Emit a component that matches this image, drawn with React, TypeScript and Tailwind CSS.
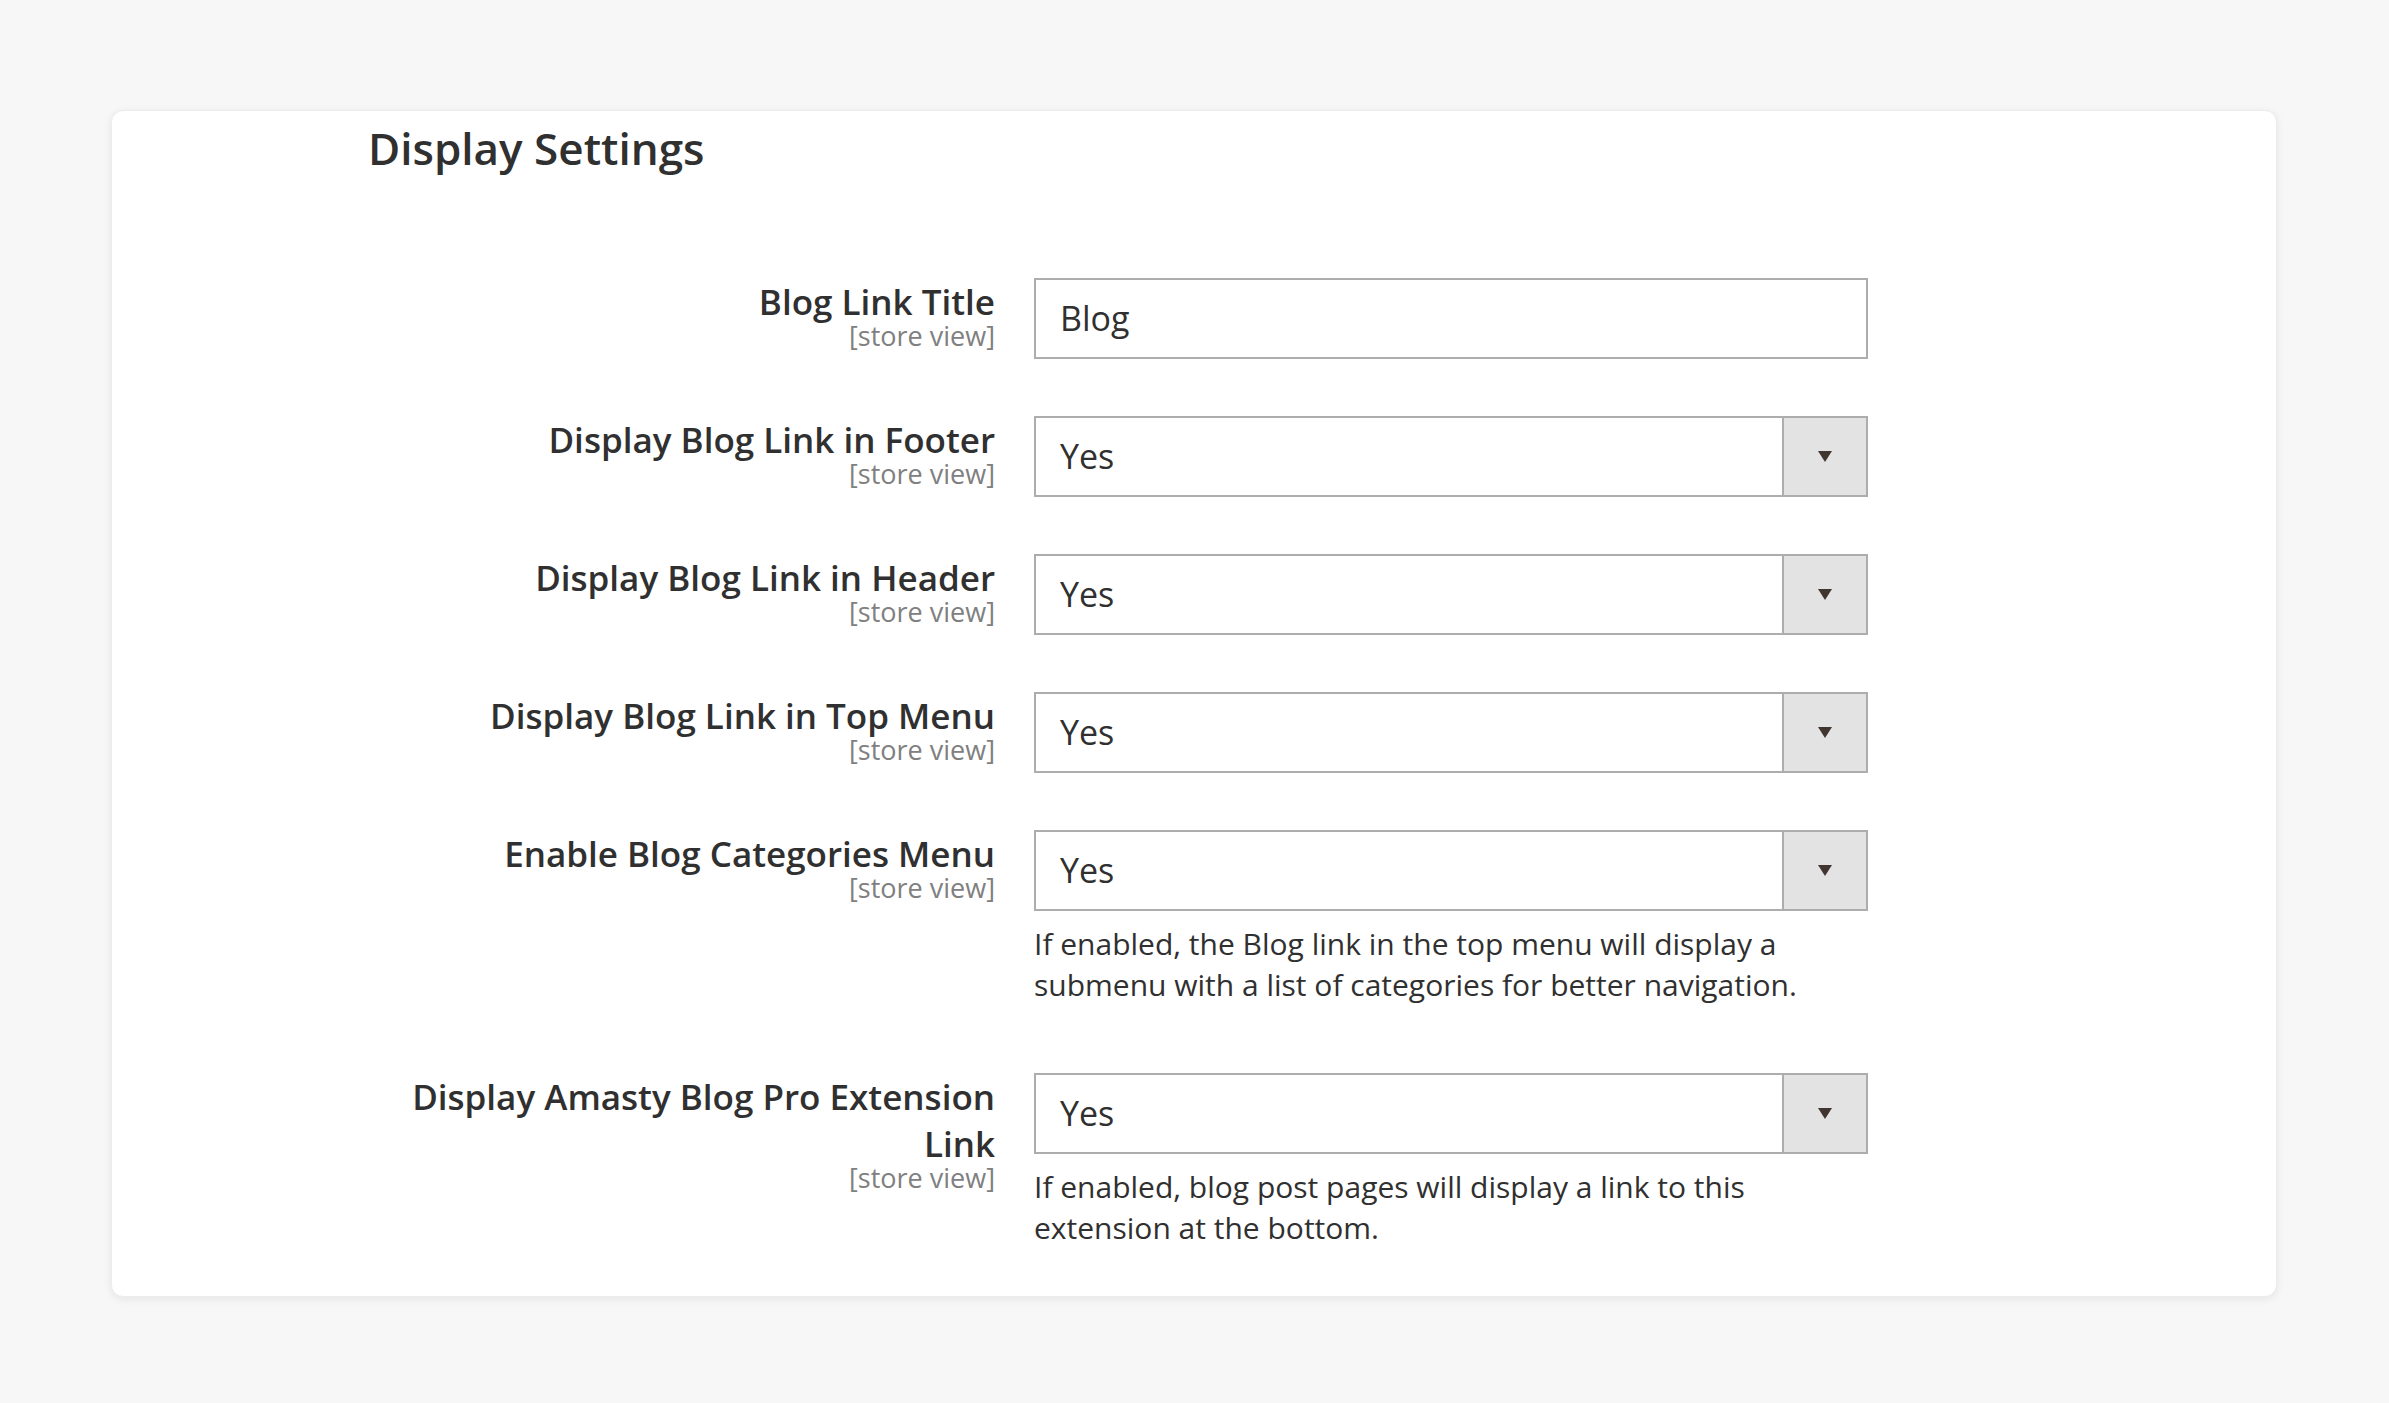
import React from 'react';

type Field = {
  label: string;
  value: string;
  select: boolean;
  help?: string[];
};

const FIELDS: Field[] = [
  { label: 'Blog Link Title', value: 'Blog', select: false },
  { label: 'Display Blog Link in Footer', value: 'Yes', select: true },
  { label: 'Display Blog Link in Header', value: 'Yes', select: true },
  { label: 'Display Blog Link in Top Menu', value: 'Yes', select: true },
  {
    label: 'Enable Blog Categories Menu',
    value: 'Yes',
    select: true,
    help: [
      'If enabled, the Blog link in the top menu will display a',
      'submenu with a list of categories for better navigation.',
    ],
  },
  {
    label: 'Display Amasty Blog Pro Extension Link',
    value: 'Yes',
    select: true,
    help: ['If enabled, blog post pages will display a link to this', 'extension at the bottom.'],
  },
];

const App = () => {
  return (
    <div
      className="min-h-screen bg-[#f7f7f7] pt-[110px] pl-[111px]"
      style={{ fontFamily: '"Open Sans", "Noto Sans", sans-serif' }}
    >
      <div className="w-[2166px] rounded-[12px] bg-white pt-[12px] pb-[48px] pl-[256px] shadow-[0_2px_8px_rgba(0,0,0,0.08)] border border-[#ececec]">
        <h2 className="text-[44px] leading-[50px] font-semibold text-[#303030]">Display Settings</h2>

        <div className="mt-[105px] flex flex-col">
          {FIELDS.map((f, i) => (
            <div key={i} className={`flex ${f.help ? 'mb-[68px]' : 'mb-[57px]'} last:mb-0`}>
              {/* Label column */}
              <div className="w-[627px] shrink-0 text-right">
                <div className="text-[35px] leading-[47px] font-semibold text-[#303030]">{f.label}</div>
                <div className="-mt-[4px] text-[27px] leading-[30px] text-[#808080]">[store view]</div>
              </div>

              {/* Control column */}
              <div className="ml-[39px] w-[834px]">
                <div className="flex h-[81px] border-2 border-[#adadad] bg-white">
                  <div className="flex flex-1 items-center pl-[24px] text-[34px] text-[#303030]">{f.value}</div>
                  {f.select && (
                    <div className="flex w-[84px] items-center justify-center border-l-2 border-[#adadad] bg-[#e3e3e3]">
                      <svg width="14" height="11" viewBox="0 0 14 11">
                        <path d="M0 0 H14 L7 11 Z" fill="#41362f" />
                      </svg>
                    </div>
                  )}
                </div>
                {f.help && (
                  <div className="mt-[12px] text-[30px] leading-[41px] text-[#303030]">
                    {f.help.map((l, j) => (
                      <div key={j}>{l}</div>
                    ))}
                  </div>
                )}
              </div>
            </div>
          ))}
        </div>
      </div>
    </div>
  );
};

export default App;
